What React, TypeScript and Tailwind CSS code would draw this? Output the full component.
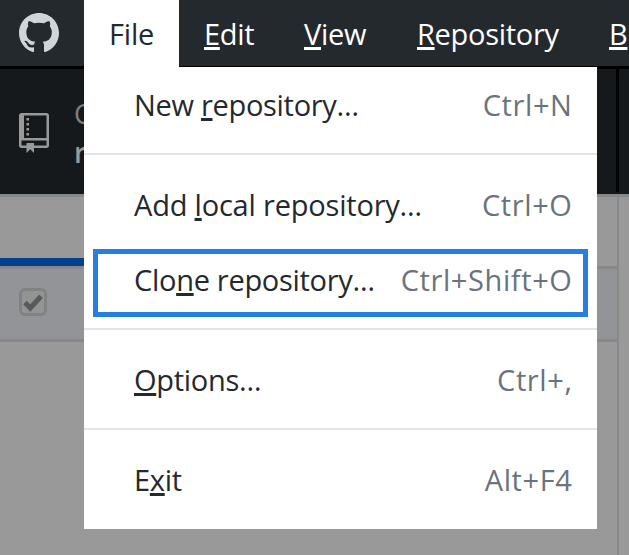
import type { ReactNode } from 'react';

function Key({ children }: { children: ReactNode }) {
  return (
    <span className="underline decoration-[3px] underline-offset-[2px] [text-decoration-skip-ink:none]">
      {children}
    </span>
  );
}

function Item({
  label,
  shortcut,
  tracking = 'tracking-[-0.3px]',
}: {
  label: ReactNode;
  shortcut: string;
  tracking?: string;
}) {
  return (
    <div className="flex h-[75px] shrink-0 items-center justify-between pr-[25px] pb-[2px] pl-[50px]">
      <span className={`whitespace-pre text-[#24292e] ${tracking}`}>{label}</span>
      <span className="mr-[-0.5px] whitespace-pre tracking-[0.6px] text-[#6a737d]">{shortcut}</span>
    </div>
  );
}

function Separator() {
  return <div className="mt-[10px] mb-[13px] h-[2px] shrink-0 bg-[#e1e4e8]" />;
}

export default function App() {
  return (
    <div className="relative flex h-[555px] w-[629px] flex-col overflow-hidden bg-[#999999] font-['Open_Sans','Noto_Sans',sans-serif] text-[29px] leading-[40px] font-normal">
      <header className="flex h-[67px] shrink-0 border-b border-black bg-[#24292e] text-white">
        <div className="w-[84px] shrink-0 pt-[13px] pl-[19px]">
          <svg viewBox="0 0 16 16" className="size-[40px] fill-[#d1d5da]">
            <path fillRule="evenodd" d="M8 0C3.58 0 0 3.58 0 8c0 3.54 2.29 6.53 5.47 7.59.4.07.55-.17.55-.38 0-.19-.01-.82-.01-1.49-2.01.37-2.53-.49-2.69-.94-.09-.23-.48-.94-.82-1.13-.28-.15-.68-.52-.01-.53.63-.01 1.08.58 1.23.82.72 1.21 1.87.87 2.33.66.07-.52.28-.87.51-1.07-1.78-.2-3.64-.89-3.64-3.95 0-.87.31-1.59.82-2.15-.08-.2-.36-1.02.08-2.12 0 0 .67-.21 2.2.82.64-.18 1.32-.27 2-.27s1.36.09 2 .27c1.53-1.04 2.2-.82 2.2-.82.44 1.1.16 1.92.08 2.12.51.56.82 1.27.82 2.15 0 3.07-1.87 3.75-3.65 3.95.29.25.54.73.54 1.48 0 1.07-.01 1.93-.01 2.2 0 .21.15.46.55.38A8.01 8.01 0 0 0 16 8c0-4.42-3.58-8-8-8z" />
          </svg>
        </div>
        <div className="h-[67px] w-[95px] shrink-0 bg-white pt-[14px] pl-[25px] tracking-[-0.2px] text-[#24292e]">File</div>
        <nav className="flex pt-[14px] pl-[25px] tracking-[-0.3px] whitespace-pre">
          <div className="w-[100px] shrink-0"><Key>E</Key>dit</div>
          <div className="w-[113px] shrink-0"><Key>V</Key>iew</div>
          <div className="w-[192px] shrink-0"><Key>R</Key>epository</div>
          <div className="shrink-0"><Key>B</Key>r</div>
        </nav>
      </header>

      <div className="flex h-[127px] shrink-0 border-t-2 border-black bg-[#15191c]">
        <div className="flex h-[123px] w-[619px] shrink-0 border-r-[3px] border-black">
          <svg viewBox="0 0 12 16" className="mt-[44px] ml-[19px] h-[40px] w-[30px] fill-[#999999]">
            <path fillRule="evenodd" d="M4 9H3V8h1v1zm0-3H3v1h1V6zm0-2H3v1h1V4zm0-2H3v1h1V2zm8-1v12c0 .55-.45 1-1 1H6v2l-1.5-1.5L3 16v-2H1c-.55 0-1-.45-1-1V1c0-.55.45-1 1-1h10c.55 0 1 .45 1 1zm-1 10H1v2h2v-1h3v1h5v-2zm0-10H2v9h9V1z" />
          </svg>
          <div className="mt-[25px] ml-[25px]">
            <div className="text-[27px] text-[#7d8083]">C</div>
            <div className="mt-[-2px] text-[28px] font-semibold text-[#999999]">r</div>
          </div>
        </div>
      </div>
      <div className="h-[3px] shrink-0 bg-[#87888a]" />
      <main className="w-[619px] grow border-r-2 border-[#87888a]">
        <div className="flex h-[69px] flex-col justify-end">
          <div className="h-[8px] w-[308px] bg-[#01408a]" />
        </div>
        <div className="h-[76px] border-y-[3px] border-[#87888a] bg-[#929497] pt-[19px] pl-[19px]">
          <div className="flex size-[28px] items-center justify-center rounded-[6px] border-[3px] border-[#808283] bg-[#949494]">
            <svg viewBox="0 0 20 20" className="size-[20px] fill-none stroke-[#595b5b] stroke-[5]">
              <path d="M2 10.5 7.3 16 18 4.2" />
            </svg>
          </div>
        </div>
      </main>

      <div className="absolute top-[67px] left-[84px] flex h-[462px] w-[513px] flex-col bg-white pt-px">
        <Item label={<>New <Key>r</Key>epository…</>} shortcut="Ctrl+N" />
        <Separator />
        <Item label={<>Add <Key>l</Key>ocal repository…</>} shortcut="Ctrl+O" tracking="tracking-[-0.2px]" />
        <Item label={<>Clo<Key>n</Key>e repository…</>} shortcut="Ctrl+Shift+O" />
        <Separator />
        <Item label={<><Key>O</Key>ptions…</>} shortcut="Ctrl+," />
        <Separator />
        <Item label={<>E<Key>x</Key>it</>} shortcut="Alt+F4" />
        <div className="absolute top-[182px] left-[9px] h-[68px] w-[495px] border-[5px] border-[#267fe0]" />
      </div>
    </div>
  );
}
